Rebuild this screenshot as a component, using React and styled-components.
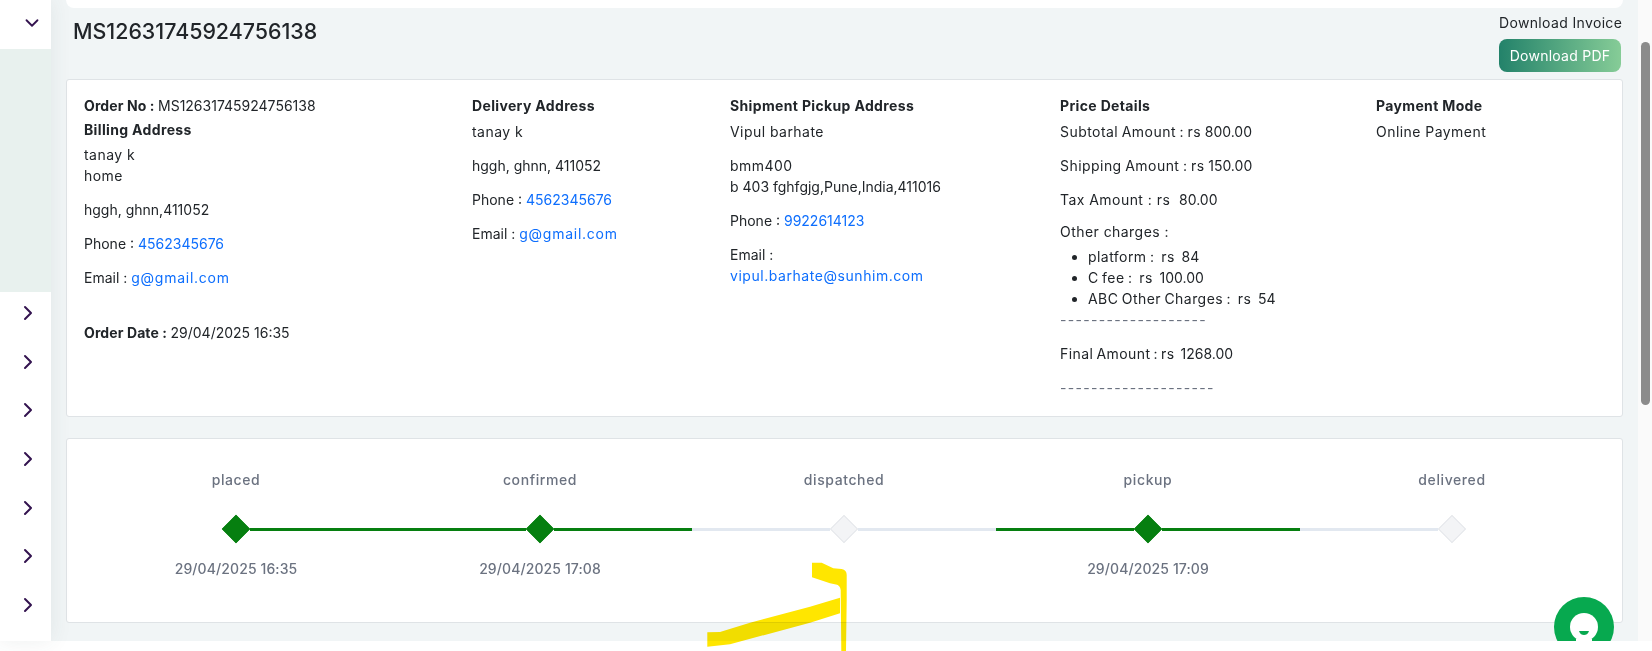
import React from "react";
import styled, { createGlobalStyle } from "styled-components";
import { ChevronDown, ChevronRight } from "lucide-react";

const Global = createGlobalStyle`
  html, body { margin: 0; padding: 0; background: #fff; overflow: hidden; }
  * { box-sizing: border-box; }
  body { font-family: "Inter", "Noto Sans", sans-serif; font-size: 14px; line-height: 21px; color: #212529; letter-spacing: 0.45px; }
`;

const Page = styled.div`
  position: relative;
  width: 1652px;
  height: 651px;
  overflow: hidden;
  padding-bottom: 10px;
  display: flex;
`;

const Sidebar = styled.aside`
  width: 51px;
  flex: none;
  background: #fff;
  box-shadow: 0 0 22px rgba(60, 80, 80, 0.09);
  z-index: 1;
  display: flex;
  flex-direction: column;
`;

const SideHead = styled.div`
  height: 49px;
  padding: 12px 0 0 21px;
  color: #33134f;
  svg { display: block; }
`;

const SidePanel = styled.div`
  height: 243px;
  background: #e8f1ee;
`;

const SideRow = styled.div`
  height: 48.67px;
  padding: 9px 0 0 16px;
  color: #33134f;
  svg { display: block; }
`;

const Main = styled.main`
  position: relative;
  flex: 1;
  min-width: 0;
  background: #f1f5f6;
  padding: 0 15px;
  overflow: hidden;
`;

const TopStrip = styled.div`
  height: 8px;
  background: #fff;
  border-radius: 0 0 8px 8px;
`;

const Header = styled.header`
  height: 71px;
  display: flex;
  justify-content: space-between;
  align-items: flex-start;
`;

const Title = styled.h1`
  margin: 9px 0 0 7px;
  font-size: 21.4px;
  line-height: 28px;
  font-weight: 500;
  letter-spacing: 0;
  color: #212529;
`;

const Invoice = styled.div`
  width: 124px;
  display: flex;
  flex-direction: column;
  padding-top: 4px;
`;

const InvoiceLabel = styled.div`
  font-size: 14px;
  line-height: 22px;
  letter-spacing: 0.35px;
  white-space: nowrap;
`;

const PdfButton = styled.button`
  margin-top: 5px;
  width: 122px;
  height: 33px;
  border: 0;
  border-radius: 8px;
  background: linear-gradient(90deg, #23826a, #86cc97);
  color: #fff;
  font: inherit;
  font-size: 14px;
  letter-spacing: 0.25px;
  padding: 0;
`;

const Card = styled.section`
  background: #fff;
  border: 1px solid #dfe3e6;
  border-radius: 3px;
`;

const DetailCard = styled(Card)`
  height: 338px;
  padding: 15px 0 0 17px;
  display: grid;
  grid-template-columns: 388px 258px 330px 316px 1fr;
`;

const Col = styled.div`
  min-width: 0;
`;

const Para = styled.p`
  margin: 0 0 ${(p) => p.$gap ?? 13}px;
  word-spacing: ${(p) => p.$words ?? 0}px;
`;

const Heading = styled.div`
  font-weight: 700;
  letter-spacing: 0.35px;
  margin-bottom: ${(p) => p.$gap ?? 5}px;
`;

const Strong = styled.strong`
  font-weight: 700;
  letter-spacing: 0.1px;
`;

const Num = styled.span`
  letter-spacing: 0;
  font-weight: 400;
`;

const Link = styled.a`
  color: #0d6efd;
  text-decoration: none;
  letter-spacing: ${(p) => p.$spacing ?? 0.55}px;
`;

const Charges = styled.ul`
  margin: 0;
  padding: 0 0 0 28px;
  word-spacing: -1px;
`;

const Dashes = styled.div`
  color: #6b7280;
  letter-spacing: 1.3px;
  white-space: nowrap;
  margin-bottom: ${(p) => p.$gap ?? 0}px;
`;

const StepCard = styled(Card)`
  margin-top: 21px;
  height: 185px;
  padding: 30px 17px 0;
  display: grid;
  grid-template-columns: repeat(5, 304px);
`;

const Step = styled.div`
  display: flex;
  flex-direction: column;
  align-items: center;
  color: #6b7280;
  font-weight: 500;
  letter-spacing: 0.6px;
`;

const StepDate = styled.div`
  letter-spacing: 0.1px;
`;

const StepTrack = styled.div`
  width: 100%;
  height: 28px;
  margin: 25px 0 15px;
  display: flex;
  align-items: center;
`;

const Segment = styled.div`
  flex: 1;
  height: 3px;
  background: ${(p) => (p.$hidden ? "transparent" : p.$done ? "#067f10" : "#e2e8f0")};
`;

const Diamond = styled.div`
  width: 20px;
  height: 20px;
  flex: none;
  margin: 0 4px;
  transform: rotate(45deg);
  background: ${(p) => (p.$done ? "#067f10" : "#f3f4f6")};
  border: 1px solid ${(p) => (p.$done ? "#067f10" : "#e5e7eb")};
`;

const Bubble = styled.div`
  position: absolute;
  left: 1503px;
  top: 597px;
  width: 60px;
  height: 60px;
  border-radius: 50%;
  background: #07a94f;
  svg { display: block; }
`;

const Scrollbar = styled.div`
  width: 14px;
  flex: none;
  background: #fafafa;
  padding: 42px 0 0 3px;
`;

const Thumb = styled.div`
  width: 9px;
  height: 363px;
  border-radius: 5px;
  background: #8b8b8b;
`;

const Scribble = styled.svg`
  position: absolute;
  left: 0;
  top: 0;
  z-index: 5;
  mix-blend-mode: multiply;
  pointer-events: none;
`;

const steps = [
  { label: "placed", date: "29/04/2025 16:35", done: true, first: true },
  { label: "confirmed", date: "29/04/2025 17:08", done: true },
  { label: "dispatched", date: "", done: false },
  { label: "pickup", date: "29/04/2025 17:09", done: true },
  { label: "delivered", date: "", done: false, last: true },
];

export default function App() {
  return (
    <Page>
      <Global />
      <Sidebar>
        <SideHead><ChevronDown size={22} /></SideHead>
        <SidePanel />
        {Array.from({ length: 7 }, (_, i) => (
          <SideRow key={i}><ChevronRight size={24} /></SideRow>
        ))}
      </Sidebar>
      <Main>
        <TopStrip />
        <Header>
          <Title>MS12631745924756138</Title>
          <Invoice>
            <InvoiceLabel>Download Invoice</InvoiceLabel>
            <PdfButton>Download PDF</PdfButton>
          </Invoice>
        </Header>
        <DetailCard>
          <Col>
            <Heading $gap={3}><Strong>Order No : </Strong><Num>MS12631745924756138</Num></Heading>
            <Heading $gap={4}>Billing Address</Heading>
            <Para>tanay k<br />home</Para>
            <Para><Num>hggh, ghnn,411052</Num></Para>
            <Para><Num>Phone : </Num><Link><Num>4562345676</Num></Link></Para>
            <Para $gap={34}><Num>Email : </Num><Link $spacing={0.75}>g@gmail.com</Link></Para>
            <Para><Strong>Order Date : </Strong><Num>29/04/2025 16:35</Num></Para>
          </Col>
          <Col>
            <Heading>Delivery Address</Heading>
            <Para>tanay k</Para>
            <Para><Num>hggh, ghnn, 411052</Num></Para>
            <Para><Num>Phone : </Num><Link><Num>4562345676</Num></Link></Para>
            <Para><Num>Email : </Num><Link $spacing={0.75}>g@gmail.com</Link></Para>
          </Col>
          <Col>
            <Heading>Shipment Pickup Address</Heading>
            <Para>Vipul barhate</Para>
            <Para>bmm400<br /><Num>b 403 fghfgjg,Pune,India,411016</Num></Para>
            <Para><Num>Phone : </Num><Link><Num>9922614123</Num></Link></Para>
            <Para><Num>Email :</Num><br /><Link>vipul.barhate@sunhim.com</Link></Para>
          </Col>
          <Col>
            <Heading>Price Details</Heading>
            <Para $words={-0.8}>Subtotal Amount : rs <Num>800.00</Num></Para>
            <Para $words={-0.8}>Shipping Amount : rs <Num>150.00</Num></Para>
            <Para $gap={11}>Tax Amount : rs&nbsp; <Num>80.00</Num></Para>
            <Para $gap={4}>Other charges :</Para>
            <Charges>
              <li>platform :&nbsp; rs&nbsp; <Num>84</Num></li>
              <li>C fee :&nbsp; rs&nbsp; <Num>100.00</Num></li>
              <li>ABC Other Charges :&nbsp; rs&nbsp; <Num>54</Num></li>
            </Charges>
            <Dashes $gap={13}>-------------------</Dashes>
            <Para $words={-1.4}>Final Amount : rs&nbsp; <Num>1268.00</Num></Para>
            <Dashes>--------------------</Dashes>
          </Col>
          <Col>
            <Heading>Payment Mode</Heading>
            <Para>Online Payment</Para>
          </Col>
        </DetailCard>
        <StepCard>
          {steps.map((s) => (
            <Step key={s.label}>
              <div>{s.label}</div>
              <StepTrack>
                <Segment $done={s.done} $hidden={s.first} />
                <Diamond $done={s.done} />
                <Segment $done={s.done} $hidden={s.last} />
              </StepTrack>
              <StepDate>{s.date}</StepDate>
            </Step>
          ))}
        </StepCard>
        <Bubble>
          <svg width="60" height="60" viewBox="0 0 60 60">
            <circle cx="30" cy="30" r="14" fill="#fff" />
            <path d="M22 42h16v6H22z" fill="#fff" />
            <path d="M25 34h10c-1 3-3 4-5 4s-4-1-5-4z" fill="#07a94f" />
          </svg>
        </Bubble>
      </Main>
      <Scrollbar><Thumb /></Scrollbar>
      <Scribble width="1652" height="651" viewBox="0 0 1652 651" aria-hidden="true">
        <path fill="#ffe600" d="M812 562.7 L821.7 562.7 L833.3 568.3 L841.7 569 Q846.7 570 846.7 575 L846.7 600 L846 651 L841.3 651 L840.7 590 Q840 585 836 584.5 L830 583.3 L812 577.3 Z" />
        <path fill="#ffe600" d="M707.3 632.3 L720 632 L750 622.7 L810 606.7 L840 597.7 L840 613.3 L810 622.7 L730 644.3 L707.3 646.7 Z" />
      </Scribble>
    </Page>
  );
}
